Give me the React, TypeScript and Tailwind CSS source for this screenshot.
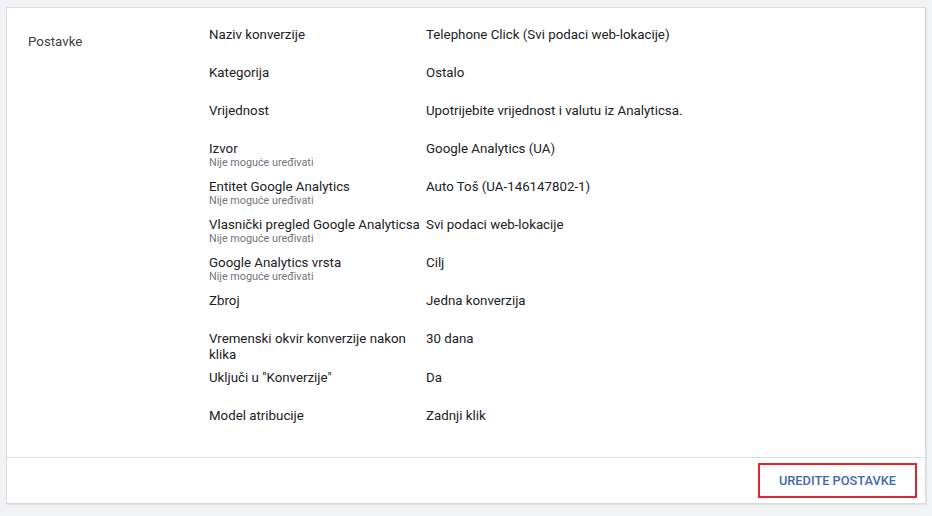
const rows: { label: string; value: string; locked?: boolean }[] = [
  { label: "Naziv konverzije", value: "Telephone Click (Svi podaci web-lokacije)" },
  { label: "Kategorija", value: "Ostalo" },
  { label: "Vrijednost", value: "Upotrijebite vrijednost i valutu iz Analyticsa." },
  { label: "Izvor", value: "Google Analytics (UA)", locked: true },
  { label: "Entitet Google Analytics", value: "Auto Toš (UA-146147802-1)", locked: true },
  { label: "Vlasnički pregled Google Analyticsa", value: "Svi podaci web-lokacije", locked: true },
  { label: "Google Analytics vrsta", value: "Cilj", locked: true },
  { label: "Zbroj", value: "Jedna konverzija" },
  { label: "Vremenski okvir konverzije nakon klika", value: "30 dana" },
  { label: 'Uključi u "Konverzije"', value: "Da" },
  { label: "Model atribucije", value: "Zadnji klik" },
];

export default function App() {
  return (
    <div className="w-[932px] h-[516px] bg-[#f1f3f4] pt-[7px] pl-[6px] font-['Roboto',sans-serif] text-[13.3px] text-[#202124]">
      <div className="w-[920px] bg-white border border-[#dadce0] shadow-[1px_1px_1px_rgba(0,0,0,0.06)] flex flex-col">
        <div className="h-[449px] flex pt-[19px]">
          <div className="w-[202px] pl-[21px] pt-[7px] leading-4 text-[#3c4043]">Postavke</div>
          <div className="flex flex-col">
            {rows.map((r) => (
              <div key={r.label} className="flex min-h-[38px] pb-[7px]">
                <div className="w-[217px]">
                  <div className="leading-4">{r.label}</div>
                  {r.locked && (
                    <div className="text-[10.8px] leading-[11px] text-[#70757a]">Nije moguće uređivati</div>
                  )}
                </div>
                <div className="leading-4">{r.value}</div>
              </div>
            ))}
          </div>
        </div>
        <div className="h-[46px] border-t border-[#dadce0] flex justify-end items-center pr-[8px] pb-[1px]">
          <button className="w-[159px] h-[35px] border-2 border-[#e3262b] text-[12.8px] font-medium text-[#3f67b8] pt-[2px]">
            UREDITE POSTAVKE
          </button>
        </div>
      </div>
    </div>
  );
}
